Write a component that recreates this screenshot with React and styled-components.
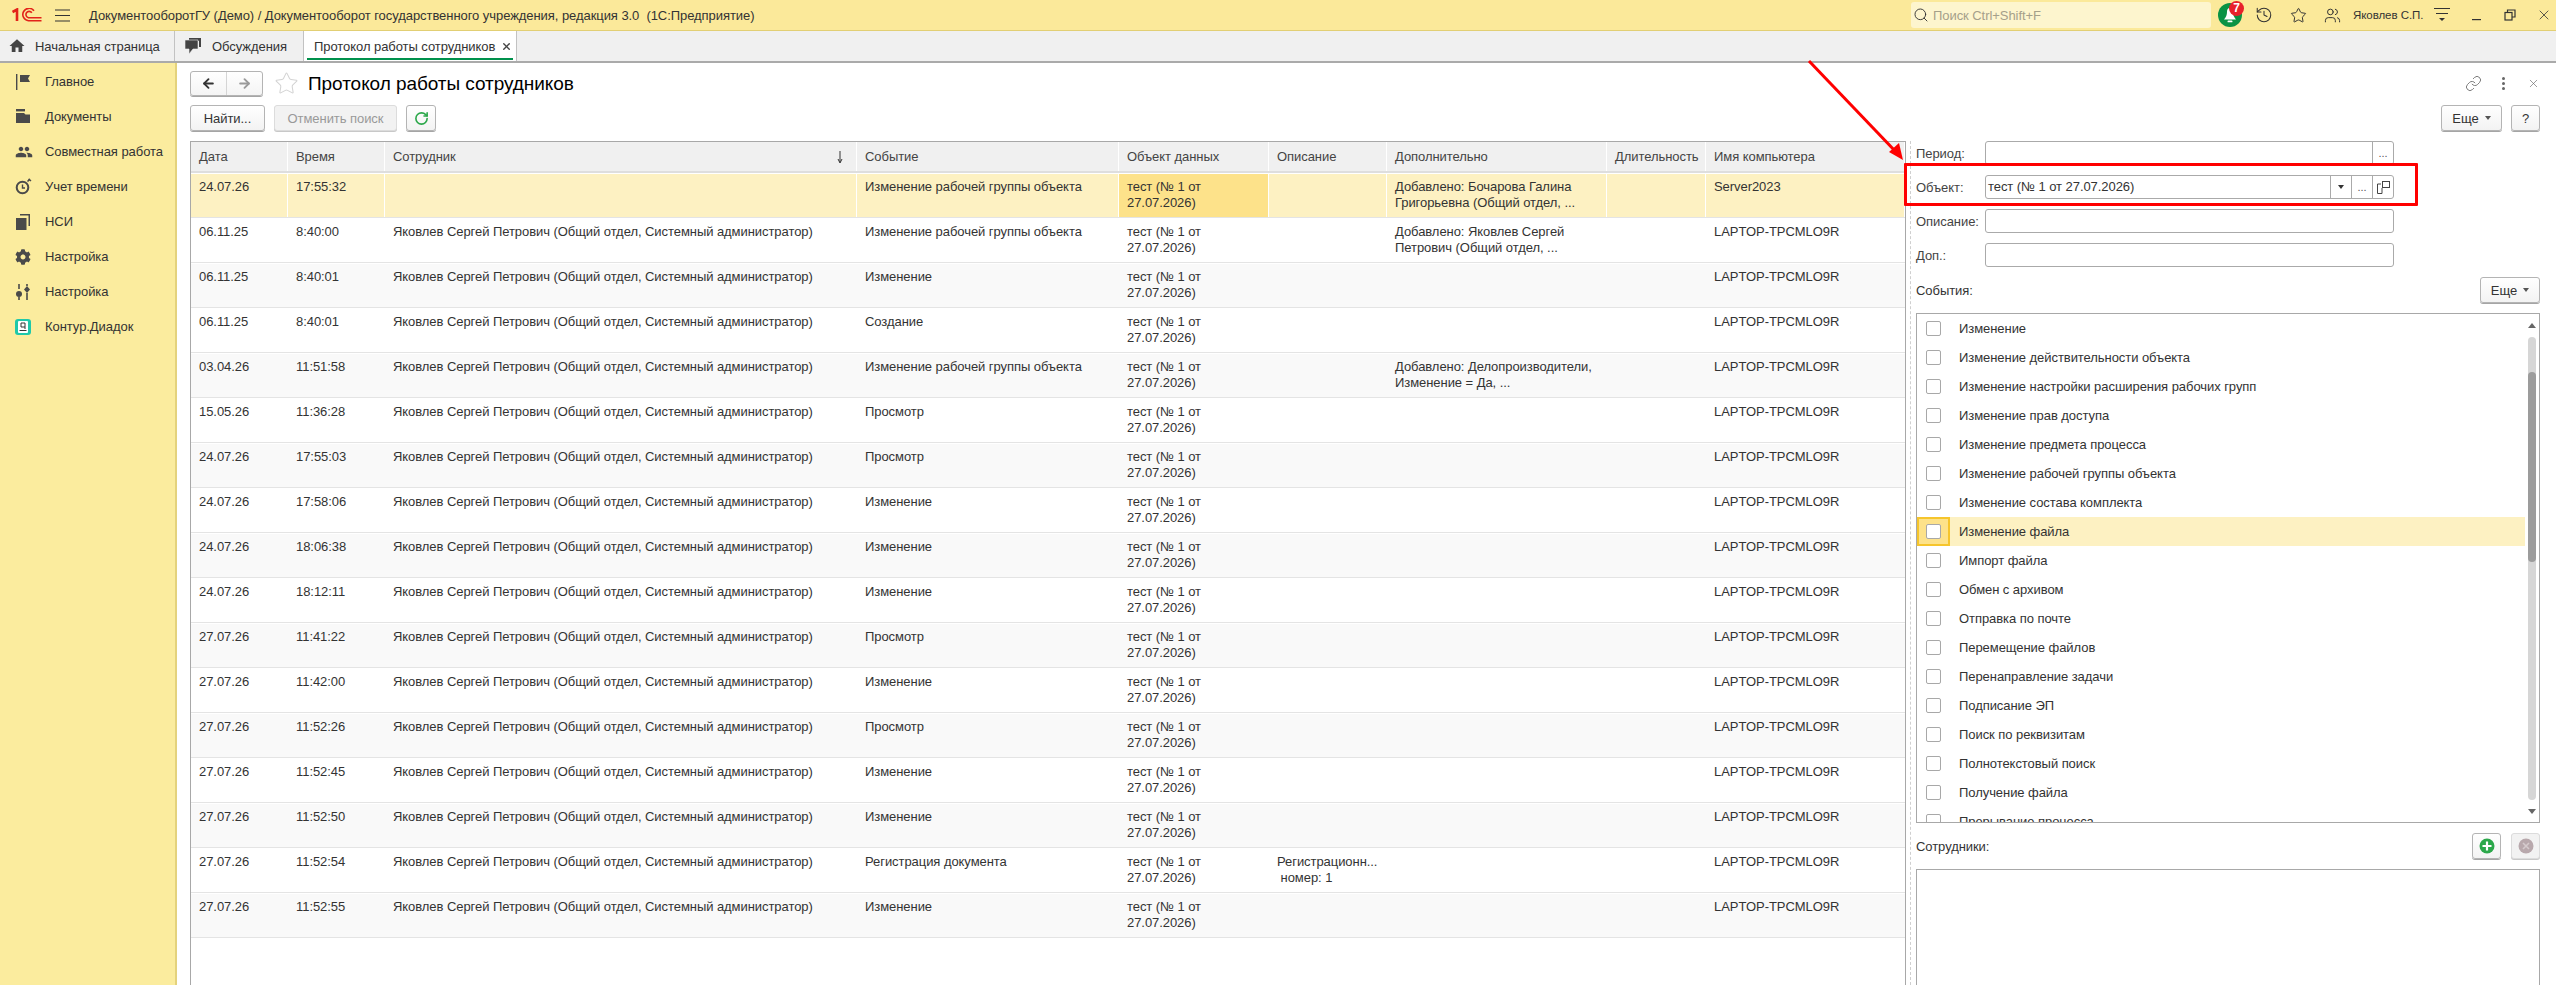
import React from 'react'
import styled, { createGlobalStyle } from 'styled-components'
import { ArrowLeft, ArrowRight, History, Link, RotateCw, Search, Star, Users, X } from 'lucide-react'
import { FaCog } from 'react-icons/fa'
import { MdHome, MdPeople } from 'react-icons/md'

const GlobalStyle = createGlobalStyle`
html,body{
  margin:0;
  height:100%;
  overflow:hidden;
  background:#fff;
}
*{box-sizing:border-box;}
#root{height:100%;}
`

const COLS = '97px 97px 472px 262px 150px 118px 220px 99px 199px'

const HEADERS = ['Дата', 'Время', 'Сотрудник', 'Событие', 'Объект данных', 'Описание', 'Дополнительно', 'Длительность', 'Имя компьютера']

const EMP = 'Яковлев Сергей Петрович (Общий отдел, Системный администратор)'
const OBJ = 'тест (№ 1 от\n27.07.2026)'
const PC = 'LAPTOP-TPCMLO9R'
const GROUP = 'Изменение рабочей группы объекта'

const ROWS = [
  ['24.07.26', '17:55:32', '', GROUP, OBJ, '', 'Добавлено: Бочарова Галина\nГригорьевна (Общий отдел, ...', '', 'Server2023'],
  ['06.11.25', '8:40:00', EMP, GROUP, OBJ, '', 'Добавлено: Яковлев Сергей\nПетрович (Общий отдел, ...', '', PC],
  ['06.11.25', '8:40:01', EMP, 'Изменение', OBJ, '', '', '', PC],
  ['06.11.25', '8:40:01', EMP, 'Создание', OBJ, '', '', '', PC],
  ['03.04.26', '11:51:58', EMP, GROUP, OBJ, '', 'Добавлено: Делопроизводители,\nИзменение = Да, ...', '', PC],
  ['15.05.26', '11:36:28', EMP, 'Просмотр', OBJ, '', '', '', PC],
  ['24.07.26', '17:55:03', EMP, 'Просмотр', OBJ, '', '', '', PC],
  ['24.07.26', '17:58:06', EMP, 'Изменение', OBJ, '', '', '', PC],
  ['24.07.26', '18:06:38', EMP, 'Изменение', OBJ, '', '', '', PC],
  ['24.07.26', '18:12:11', EMP, 'Изменение', OBJ, '', '', '', PC],
  ['27.07.26', '11:41:22', EMP, 'Просмотр', OBJ, '', '', '', PC],
  ['27.07.26', '11:42:00', EMP, 'Изменение', OBJ, '', '', '', PC],
  ['27.07.26', '11:52:26', EMP, 'Просмотр', OBJ, '', '', '', PC],
  ['27.07.26', '11:52:45', EMP, 'Изменение', OBJ, '', '', '', PC],
  ['27.07.26', '11:52:50', EMP, 'Изменение', OBJ, '', '', '', PC],
  ['27.07.26', '11:52:54', EMP, 'Регистрация документа', OBJ, 'Регистрационн...\n номер: 1', '', '', PC],
  ['27.07.26', '11:52:55', EMP, 'Изменение', OBJ, '', '', '', PC],
]

const EVENTS = [
  'Изменение',
  'Изменение действительности объекта',
  'Изменение настройки расширения рабочих групп',
  'Изменение прав доступа',
  'Изменение предмета процесса',
  'Изменение рабочей группы объекта',
  'Изменение состава комплекта',
  'Изменение файла',
  'Импорт файла',
  'Обмен с архивом',
  'Отправка по почте',
  'Перемещение файлов',
  'Перенаправление задачи',
  'Подписание ЭП',
  'Поиск по реквизитам',
  'Полнотекстовый поиск',
  'Получение файла',
  'Прерывание процесса',
]

const Logo = () => (
  <svg width="30" height="14" viewBox="0 0 30 14" fill="none" stroke="#e2231a">
    <path d="M0.5 4 L5 1.5 V13" strokeWidth="2.6" />
    <path d="M22 2.8 A6.2 6.2 0 1 0 16.5 12.7 H29.5" strokeWidth="1.6" />
    <path d="M19.8 4.8 A3.2 3.2 0 1 0 16.5 9.7 H29.5" strokeWidth="1.6" />
  </svg>
)

const Burger = () => (
  <svg width="16" height="13" viewBox="0 0 16 13" stroke="#333" strokeWidth="1.2">
    <path d="M0 1 H15 M0 6.5 H15 M0 12 H15" />
  </svg>
)

const ChatIcon = () => (
  <svg width="16" height="17" viewBox="0 0 16 17" fill="#444">
    <path d="M4 0 H16 V9 H14 V3 H4 Z" />
    <path d="M0 2 H13 V11 H8 L4 16 V11 H0 Z" stroke="#f0f0f0" strokeWidth="0.6" />
  </svg>
)

const FlagIcon = () => (
  <svg width="16" height="16" viewBox="0 0 16 16" fill="#4a4a4a">
    <rect x="1" y="0" width="1.4" height="16" />
    <path d="M5 1 H15 L13 4.5 L15 8 H5 Z" />
  </svg>
)

const FolderIcon = () => (
  <svg width="16" height="15" viewBox="0 0 16 15" fill="#4a4a4a">
    <rect x="1" y="0" width="9" height="2.4" />
    <path d="M1 4 H9 L10.5 5.5 H15 V14 H1 Z" />
  </svg>
)

const TimerIcon = () => (
  <svg width="17" height="17" viewBox="0 0 17 17" fill="none" stroke="#4a4a4a" strokeWidth="2">
    <circle cx="7.5" cy="9.5" r="5.8" />
    <path d="M7.5 6.5 V10 H10" strokeWidth="1.4" />
    <path d="M12.5 3.5 L15 1 M13.5 1 L16 3" strokeWidth="1.6" />
  </svg>
)

const CopyIcon = () => (
  <svg width="16" height="16" viewBox="0 0 16 16" fill="#4a4a4a">
    <rect x="1" y="4" width="10.5" height="12" />
    <path d="M5 0 H15 V12 H13.5 V1.6 H5 Z" />
  </svg>
)

const SlidersIcon = () => (
  <svg width="16" height="16" viewBox="0 0 16 16" fill="#4a4a4a">
    <rect x="3.2" y="0" width="1.6" height="5" />
    <circle cx="4" cy="10" r="3" />
    <rect x="3.2" y="13" width="1.6" height="3" />
    <rect x="11.2" y="0" width="1.6" height="2" />
    <path d="M12 2 L15 5.5 L12 9 L9 5.5 Z" />
    <rect x="11.2" y="9" width="1.6" height="7" />
  </svg>
)

const KonturIcon = () => (
  <svg width="16" height="16" viewBox="0 0 16 16">
    <rect x="0" y="0" width="16" height="16" rx="3" fill="#1fc8a9" />
    <rect x="3" y="2" width="10" height="12" rx="1" fill="#fff" />
    <path d="M6 4 H10 V10 M6 4 V8 H10 M4.5 11.5 H11.5" stroke="#333" strokeWidth="1" fill="none" />
  </svg>
)

const MenuDown = () => (
  <svg width="16" height="16" viewBox="0 0 16 16" fill="#333">
    <rect x="0" y="1" width="16" height="1" />
    <rect x="2" y="6" width="12" height="1" />
    <path d="M5 11 H11 L8 14 Z" />
  </svg>
)

const MinIcon = () => (
  <svg width="12" height="12" viewBox="0 0 12 12">
    <rect x="2" y="10" width="9" height="1.2" fill="#333" />
  </svg>
)

const RestoreIcon = () => (
  <svg width="12" height="12" viewBox="0 0 12 12" fill="none" stroke="#333" strokeWidth="1.2">
    <rect x="1" y="3.5" width="7" height="7.5" />
    <path d="M3.5 3.5 V1 H11 V8 H8" />
  </svg>
)

const OpenIcon = () => (
  <svg width="13" height="13" viewBox="0 0 13 13" fill="none" stroke="#444" strokeWidth="1">
    <rect x="5.5" y="0.5" width="7" height="6" />
    <path d="M4 3 H0.5 V12.5 H5 V7" />
  </svg>
)

const PlusIcon = () => (
  <svg width="16" height="16" viewBox="0 0 16 16">
    <circle cx="8" cy="8" r="7.5" fill="#2ca84b" />
    <path d="M8 3.5 V12.5 M3.5 8 H12.5" stroke="#fff" strokeWidth="2.2" />
  </svg>
)

const RemoveIcon = () => (
  <svg width="16" height="16" viewBox="0 0 16 16">
    <circle cx="8" cy="8" r="7.5" fill="#b8a8ac" />
    <path d="M5 5 L11 11 M11 5 L5 11" stroke="#d5cbcd" strokeWidth="1.6" />
  </svg>
)

const BellIcon = () => (
  <svg width="24" height="24" viewBox="0 0 24 24">
    <circle cx="12" cy="12" r="12" fill="#0a9344" />
    <path d="M12 5 C9.5 5 9 7 9 9 C9 12 8 14 6 16.5 H18 C16 14 15 12 15 9 C15 7 14.5 5 12 5 Z" fill="#fff" />
    <rect x="9.5" y="17.5" width="5" height="1.8" rx="0.9" fill="#fff" />
  </svg>
)

const Page = styled.div`
position:relative;
height:100vh;
display:flex;
flex-direction:column;
overflow:hidden;
font-family:"Liberation Sans",Arial,sans-serif;
font-size:13px;
letter-spacing:-0.06px;
color:#333;
background:#fff;
`
const TitleBar = styled.div`
height:31px;
flex:none;
display:flex;
align-items:center;
background:#fbe99a;
border-bottom:1px solid #e2cf74;
`
const LogoSlot = styled.div`
display:flex;
margin-left:12px;
`
const BurgerSlot = styled.div`
display:flex;
margin-left:13px;
`
const AppName = styled.div`
margin-left:18px;
white-space:nowrap;
`
const SearchBox = styled.div`
margin-left:auto;
margin-right:2px;
width:300px;
height:26px;
display:flex;
align-items:center;
gap:4px;
padding-left:2px;
background:#fdf5ce;
border-radius:3px;
color:#a5a08a;
`
const IconSlot = styled.div`
width:${props => props.w || 34}px;
height:30px;
flex:none;
display:flex;
align-items:center;
justify-content:${props => props.end ? 'flex-end' : 'center'};
padding-right:${props => props.end ? 4 : 0}px;
color:#333;
`
const BellWrap = styled.div`
position:relative;
display:flex;
`
const Badge = styled.span`
position:absolute;
top:-2px;
right:-2px;
width:15px;
height:15px;
border-radius:50%;
background:#e8212b;
color:#fff;
font-weight:bold;
font-size:12px;
line-height:15px;
text-align:center;
`
const UserName = styled.div`
width:76px;
padding-left:4px;
font-size:11.5px;
white-space:nowrap;
`
const TabBar = styled.div`
height:32px;
flex:none;
display:flex;
background:#f0f0f0;
border-bottom:2px solid #aaa;
`
const Tab = styled.div`
position:relative;
width:${props => props.w}px;
display:flex;
align-items:center;
gap:${props => props.gap}px;
padding-left:${props => props.pl}px;
background:${props => props.active ? '#fff' : 'transparent'};
border-right:1px solid #c2c2c2;
white-space:nowrap;
`
const TabLine = styled.div`
position:absolute;
left:3px;
right:3px;
bottom:1px;
height:2px;
background:#00914c;
`
const TabClose = styled.span`
display:flex;
margin-left:-5px;
color:#444;
`
const Body = styled.div`
flex:1;
min-height:0;
display:flex;
`
const Sidebar = styled.div`
width:177px;
flex:none;
padding-top:1px;
background:#fbec9e;
border-right:2px solid #e4d27c;
`
const SideItem = styled.div`
height:35px;
display:flex;
align-items:center;
padding-left:15px;
white-space:nowrap;
`
const SideIcon = styled.div`
width:30px;
flex:none;
display:flex;
color:#4a4a4a;
`
const Main = styled.div`
flex:1;
min-width:0;
display:flex;
flex-direction:column;
padding:8px 16px 0 13px;
`
const HeadRow = styled.div`
height:34px;
flex:none;
display:flex;
align-items:flex-start;
`
const NavGroup = styled.div`
width:73px;
height:25px;
display:flex;
background:linear-gradient(#fff,#f4f4f4);
border:1px solid #b4b4b4;
border-radius:3px;
box-shadow:0 1px 0 #a5a5a5;
`
const NavCell = styled.div`
flex:1;
display:flex;
align-items:center;
justify-content:center;
color:${props => props.off ? '#9a9a9a' : '#333'};
border-right:${props => props.first ? '1px solid #d5d5d5' : 'none'};
`
const FavStar = styled.div`
display:flex;
margin-left:11px;
color:#d3d3d3;
`
const PageTitle = styled.div`
margin-left:9px;
font-size:19px;
line-height:26px;
color:#000;
white-space:nowrap;
`
const HeadTools = styled.div`
margin-left:auto;
display:flex;
align-items:center;
height:24px;
`
const ToolSlot = styled.div`
width:${props => props.w}px;
margin-right:${props => props.mr || 0}px;
display:flex;
justify-content:center;
color:#666;
`
const Dots = styled.div`
display:flex;
flex-direction:column;
gap:2px;
span{
  width:3px;
  height:3px;
  border-radius:50%;
  background:#666;
}
`
const ToolRow = styled.div`
height:26px;
flex:none;
display:flex;
gap:9px;
`
const Btn = styled.div`
width:${props => props.w}px;
height:26px;
flex:none;
display:flex;
align-items:center;
justify-content:center;
gap:6px;
background:${props => props.off ? '#f2f2f2' : 'linear-gradient(#fff,#f3f3f3)'};
color:${props => props.off ? '#999' : '#333'};
border:1px solid ${props => props.off ? '#dcdcdc' : '#b4b4b4'};
border-radius:3px;
box-shadow:0 1px 0 ${props => props.off ? '#c8c8c8' : '#a5a5a5'};
white-space:nowrap;
margin-left:${props => props.push ? 'auto' : '0'};
`
const Caret = styled.span`
width:0;
height:0;
border-left:3.5px solid transparent;
border-right:3.5px solid transparent;
border-top:4px solid ${props => props.dark ? '#333' : '#555'};
`
const Split = styled.div`
flex:1;
min-height:0;
margin-top:10px;
display:flex;
`
const Table = styled.div`
width:1716px;
flex:none;
border:1px solid #a8a8a8;
border-bottom:none;
overflow:hidden;
`
const HeaderRow = styled.div`
height:31px;
display:grid;
grid-template-columns:${COLS};
border-bottom:2px solid #dedede;
`
const HeaderCell = styled.div`
display:flex;
align-items:center;
justify-content:space-between;
padding:0 12px 0 8px;
background:#f0f0f0;
border-right:1px solid #fff;
color:#444;
white-space:nowrap;
`
const Row = styled.div`
height:45px;
display:grid;
grid-template-columns:${COLS};
border-top:1px solid #fff;
border-bottom:1px solid #e4e4e4;
background:${props => props.current ? '#fdf1c2' : props.shade ? '#f9f9f9' : '#fff'};
`
const Cell = styled.div`
padding:5px 0 0 8px;
line-height:16px;
white-space:pre;
overflow:hidden;
background:${props => props.focused ? '#fde28a' : 'transparent'};
border-right:1px solid ${props => props.current ? '#fff' : 'transparent'};
`
const Splitter = styled.div`
width:1px;
flex:none;
margin:0 5px 0 4px;
border-left:1px dashed #cfcfcf;
`
const Panel = styled.div`
flex:1;
min-width:0;
display:flex;
flex-direction:column;
`
const Field = styled.div`
height:24px;
flex:none;
display:flex;
align-items:center;
margin-bottom:10px;
`
const FieldLabel = styled.div`
width:69px;
flex:none;
color:#444;
`
const Input = styled.div`
width:409px;
height:24px;
display:flex;
background:#fff;
border:1px solid #aaa;
border-radius:3px;
`
const InputText = styled.div`
flex:1;
padding-left:2px;
line-height:22px;
white-space:nowrap;
`
const InputBtn = styled.div`
width:21px;
flex:none;
display:flex;
align-items:center;
justify-content:center;
border-left:1px solid #aaa;
color:#555;
font-size:11px;
`
const ListHead = styled.div`
height:26px;
flex:none;
display:flex;
align-items:center;
justify-content:space-between;
`
const Buttons = styled.div`
display:flex;
gap:10px;
`
const EventBox = styled.div`
height:510px;
flex:none;
margin:10px 0;
display:flex;
border:1px solid #a8a8a8;
overflow:hidden;
`
const EventList = styled.div`
flex:1;
min-width:0;
`
const EventRow = styled.div`
height:29px;
display:flex;
align-items:center;
background:${props => props.current ? '#fdf1c2' : 'transparent'};
`
const CheckCell = styled.div`
width:33px;
height:29px;
flex:none;
display:flex;
align-items:center;
justify-content:center;
border:${props => props.current ? '2px solid #f6c52c' : 'none'};
background:${props => props.current ? '#fde28a' : 'transparent'};
`
const Check = styled.div`
width:15px;
height:15px;
background:#fff;
border:1px solid #a8a8a8;
border-radius:2px;
`
const EventName = styled.div`
margin-left:9px;
white-space:nowrap;
`
const ScrollCol = styled.div`
width:14px;
flex:none;
display:flex;
flex-direction:column;
align-items:center;
padding-top:9px;
`
const ArrowUp = styled.span`
width:0;
height:0;
border-left:4px solid transparent;
border-right:4px solid transparent;
border-bottom:5px solid #666;
`
const ArrowDown = styled(ArrowUp)`
margin-top:9px;
border-bottom:none;
border-top:5px solid #666;
`
const Track = styled.div`
width:8px;
height:463px;
margin-top:9px;
padding-top:35px;
border-radius:4px;
background:#d6d6d6;
`
const Thumb = styled.div`
height:190px;
border-radius:4px;
background:#9c9c9c;
`
const Staff = styled.div`
flex:1;
min-height:0;
margin-top:10px;
border:1px solid #a8a8a8;
border-bottom:none;
`
const Frame = styled.div`
position:absolute;
left:1904px;
top:163px;
width:514px;
height:43px;
border:3px solid #f00;
border-radius:1px;
pointer-events:none;
`
const Overlay = styled.svg`
position:absolute;
left:0;
top:0;
pointer-events:none;
`

function ArrowDownSmall() {
  return (
    <svg width="8" height="14" viewBox="0 0 8 14" fill="none" stroke="#333">
      <path d="M4 1 V12 M2 9 L4 13 L6 9" strokeWidth="1" />
    </svg>
  )
}

export default function App() {
  return (
    <Page>
      <GlobalStyle />
      <TitleBar>
        <LogoSlot><Logo /></LogoSlot>
        <BurgerSlot><Burger /></BurgerSlot>
        <AppName>ДокументооборотГУ (Демо) / Документооборот государственного учреждения, редакция 3.0&nbsp; (1С:Предприятие)</AppName>
        <SearchBox>
          <Search size={16} color="#333" strokeWidth={1.4} />
          <span>Поиск Ctrl+Shift+F</span>
        </SearchBox>
        <IconSlot><BellWrap><BellIcon /><Badge>7</Badge></BellWrap></IconSlot>
        <IconSlot><History size={18} strokeWidth={1.4} /></IconSlot>
        <IconSlot><Star size={17} strokeWidth={1.4} /></IconSlot>
        <IconSlot><Users size={17} strokeWidth={1.4} /></IconSlot>
        <UserName>Яковлев С.П.</UserName>
        <IconSlot><MenuDown /></IconSlot>
        <IconSlot><MinIcon /></IconSlot>
        <IconSlot w={33}><RestoreIcon /></IconSlot>
        <IconSlot w={30} end="true"><X size={16} strokeWidth={1.2} /></IconSlot>
      </TitleBar>
      <TabBar>
        <Tab w={175} pl={8} gap={9}><MdHome size={18} color="#444" /><span>Начальная страница</span></Tab>
        <Tab w={129} pl={10} gap={11}><ChatIcon /><span>Обсуждения</span></Tab>
        <Tab w={213} active="true" pl={10} gap={11}>
          <span>Протокол работы сотрудников</span>
          <TabClose><X size={11} strokeWidth={3} /></TabClose>
          <TabLine />
        </Tab>
      </TabBar>
      <Body>
        <Sidebar>
          <SideItem><SideIcon><FlagIcon /></SideIcon>Главное</SideItem>
          <SideItem><SideIcon><FolderIcon /></SideIcon>Документы</SideItem>
          <SideItem><SideIcon><MdPeople size={18} /></SideIcon>Совместная работа</SideItem>
          <SideItem><SideIcon><TimerIcon /></SideIcon>Учет времени</SideItem>
          <SideItem><SideIcon><CopyIcon /></SideIcon>НСИ</SideItem>
          <SideItem><SideIcon><FaCog size={16} /></SideIcon>Настройка</SideItem>
          <SideItem><SideIcon><SlidersIcon /></SideIcon>Настройка</SideItem>
          <SideItem><SideIcon><KonturIcon /></SideIcon>Контур.Диадок</SideItem>
        </Sidebar>
        <Main>
          <HeadRow>
            <NavGroup>
              <NavCell first="true"><ArrowLeft size={15} strokeWidth={3} /></NavCell>
              <NavCell off="true"><ArrowRight size={15} strokeWidth={3} /></NavCell>
            </NavGroup>
            <FavStar><Star size={25} strokeWidth={1} /></FavStar>
            <PageTitle>Протокол работы сотрудников</PageTitle>
            <HeadTools>
              <ToolSlot w={20} mr={10}><Link size={17} strokeWidth={1.2} /></ToolSlot>
              <ToolSlot w={20} mr={13}><Dots><span /><span /><span /></Dots></ToolSlot>
              <ToolSlot w={14}><X size={13} strokeWidth={1.2} /></ToolSlot>
            </HeadTools>
          </HeadRow>
          <ToolRow>
            <Btn w={75}>Найти...</Btn>
            <Btn w={123} off="true">Отменить поиск</Btn>
            <Btn w={30}><RotateCw size={15} color="#2ca84b" strokeWidth={2.6} /></Btn>
            <Btn w={61} push="true">Еще <Caret /></Btn>
            <Btn w={29}>?</Btn>
          </ToolRow>
          <Split>
            <Table>
              <HeaderRow>
                {HEADERS.map(h => (
                  <HeaderCell key={h}>
                    {h}
                    {h === 'Сотрудник' && <ArrowDownSmall />}
                  </HeaderCell>
                ))}
              </HeaderRow>
              {ROWS.map((r, i) => (
                <Row key={i} current={i === 0} shade={i % 2 === 0}>
                  {r.map((c, j) => (
                    <Cell key={j} current={i === 0} focused={i === 0 && j === 4}>{c}</Cell>
                  ))}
                </Row>
              ))}
            </Table>
            <Splitter />
            <Panel>
              <Field>
                <FieldLabel>Период:</FieldLabel>
                <Input><InputText /><InputBtn>...</InputBtn></Input>
              </Field>
              <Field>
                <FieldLabel>Объект:</FieldLabel>
                <Input>
                  <InputText>тест (№ 1 от 27.07.2026)</InputText>
                  <InputBtn><Caret dark="true" /></InputBtn>
                  <InputBtn>...</InputBtn>
                  <InputBtn><OpenIcon /></InputBtn>
                </Input>
              </Field>
              <Field>
                <FieldLabel>Описание:</FieldLabel>
                <Input />
              </Field>
              <Field>
                <FieldLabel>Доп.:</FieldLabel>
                <Input />
              </Field>
              <ListHead>
                <span>События:</span>
                <Btn w={60}>Еще <Caret /></Btn>
              </ListHead>
              <EventBox>
                <EventList>
                  {EVENTS.map((e, i) => (
                    <EventRow key={e} current={i === 7}>
                      <CheckCell current={i === 7}><Check /></CheckCell>
                      <EventName>{e}</EventName>
                    </EventRow>
                  ))}
                </EventList>
                <ScrollCol>
                  <ArrowUp />
                  <Track><Thumb /></Track>
                  <ArrowDown />
                </ScrollCol>
              </EventBox>
              <ListHead>
                <span>Сотрудники:</span>
                <Buttons>
                  <Btn w={29}><PlusIcon /></Btn>
                  <Btn w={29} off="true"><RemoveIcon /></Btn>
                </Buttons>
              </ListHead>
              <Staff />
            </Panel>
          </Split>
        </Main>
      </Body>
      <Frame />
      <Overlay width="2556" height="985">
        <path d="M1809 61 L1897 153" stroke="#f00" strokeWidth="3" />
        <path d="M1903 160 L1889 152 L1899 143 Z" fill="#f00" />
      </Overlay>
    </Page>
  )
}
